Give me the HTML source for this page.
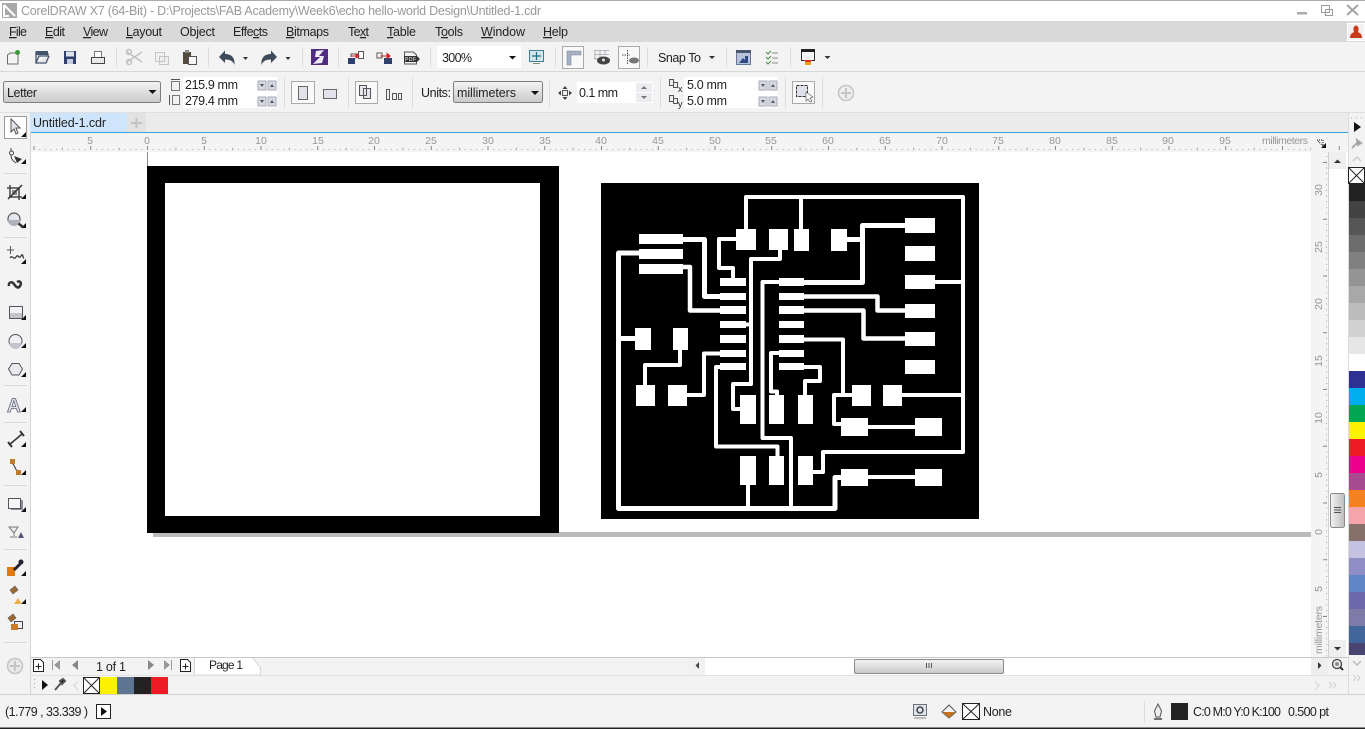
<!DOCTYPE html>
<html><head><meta charset="utf-8"><title>CorelDRAW X7</title>
<style>
html,body{margin:0;padding:0;background:#fff;overflow:hidden}
svg{display:block}
text{font-family:"Liberation Sans",sans-serif;font-size:12.5px;fill:#222}
.r{font-size:10.5px;fill:#969696;text-anchor:middle}
.sep{stroke:#dcdcdc;stroke-width:1}
.t polyline{fill:none;stroke:#fff;stroke-width:4.5;stroke-linejoin:round;stroke-linecap:butt}
</style></head><body>
<svg width="1365" height="729" viewBox="0 0 1365 729">
<defs>
<linearGradient id="g" x1="0" y1="0" x2="0" y2="1"><stop offset="0" stop-color="#f4f4f4"/><stop offset="1" stop-color="#c9c9c9"/></linearGradient>
<linearGradient id="h" x1="0" y1="0" x2="1" y2="0"><stop offset="0" stop-color="#f4f4f4"/><stop offset="1" stop-color="#bdbdbd"/></linearGradient>
</defs>

<!-- backgrounds -->
<rect width="1365" height="729" fill="#f3f3f3"/>
<rect y="0" width="1365" height="21" fill="#fff"/>
<rect y="0" width="1365" height="1" fill="#aaa"/>
<rect y="21" width="1365" height="21" fill="#d9d9d9"/>
<rect y="71" width="1365" height="1" fill="#d8d8d8"/>
<rect y="112" width="1365" height="1" fill="#dedede"/>
<rect x="30" y="113" width="1318" height="19" fill="#ebebeb"/>
<rect x="30" y="132" width="1318" height="1" fill="#38a3dc"/>
<rect x="30" y="133" width="1318" height="19" fill="#f4f4f4"/>
<rect x="31" y="152" width="1280" height="505" fill="#fff"/>
<rect x="30" y="113" width="1" height="581" fill="#d5d5d5"/>
<rect x="1329" y="152" width="19" height="505" fill="#fff"/>
<rect x="1348" y="113" width="1" height="581" fill="#dcdcdc"/>
<rect x="31" y="657" width="1317" height="1" fill="#c8c8c8"/>
<rect x="0" y="694" width="1365" height="1" fill="#cfcfcf"/>
<rect x="0" y="727.500" width="1365" height="1.500" fill="#222"/>

<!-- title -->
<rect x="2" y="3" width="15" height="15" fill="#a8a8a8"/><path d="M4 5 L15 16 M4 5 V16 H9" stroke="#fff" stroke-width="2" fill="none"/>
<text x="21" y="15" textLength="520" style="fill:#989898">CorelDRAW X7 (64-Bit) - D:\Projects\FAB Academy\Week6\echo hello-world Design\Untitled-1.cdr</text>
<rect x="1297" y="12" width="10" height="2.500" fill="#aaa"/>
<path d="M1321.500 5.500h8v7h-8z M1325.500 9.500h7v6h-7z" fill="#fff" stroke="#9a9a9a"/>
<path d="M1347 5 L1358 15 M1358 5 L1347 15" stroke="#a5a5a5" stroke-width="2"/>
<rect x="1347.500" y="23.500" width="17" height="17" fill="#f1f1f1" stroke="#fff"/>
<path d="M1350 38 C1350 33 1353 33 1354 32 C1353 30 1353 26 1356 25.500 C1359 26 1359 30 1358 32 C1359 33 1362 33 1362 38Z" fill="#c8391c"/>

<!-- menu -->
<g>
<text x="9" y="36" textLength="18"><tspan text-decoration="underline">F</tspan>ile</text>
<text x="45" y="36" textLength="20"><tspan text-decoration="underline">E</tspan>dit</text>
<text x="83" y="36" textLength="25"><tspan text-decoration="underline">V</tspan>iew</text>
<text x="126" y="36" textLength="36"><tspan text-decoration="underline">L</tspan>ayout</text>
<text x="180" y="36" textLength="35">Object</text>
<text x="233" y="36" textLength="35">Effe<tspan text-decoration="underline">c</tspan>ts</text>
<text x="286" y="36" textLength="43"><tspan text-decoration="underline">B</tspan>itmaps</text>
<text x="348" y="36" textLength="21">Te<tspan text-decoration="underline">x</tspan>t</text>
<text x="387" y="36" textLength="29"><tspan text-decoration="underline">T</tspan>able</text>
<text x="435" y="36" textLength="28">T<tspan text-decoration="underline">o</tspan>ols</text>
<text x="481" y="36" textLength="44"><tspan text-decoration="underline">W</tspan>indow</text>
<text x="543" y="36" textLength="25"><tspan text-decoration="underline">H</tspan>elp</text>
</g>

<!-- toolbar 1 -->
<path d="M7.500 64V55L10.500 53H18V64Z" fill="#f4f4f4" stroke="#6c6c6c"/><circle cx="17.500" cy="52.500" r="2.500" fill="#3c9a3c"/>
<path d="M36 63V52H41L43 54H48V56H39L36 63H46L49 56V56" fill="#e4e7ec" stroke="#43546e" stroke-width="1.300"/><rect x="36" y="51" width="12" height="4" fill="#43546e"/>
<rect x="64" y="51" width="12" height="13" fill="#2f3f6e"/><rect x="66" y="51.500" width="8" height="5" fill="#dfe3ee"/><rect x="67" y="59" width="6" height="5" fill="#c7cedf"/>
<path d="M94.500 51.500h7v6h-7z" fill="#fff" stroke="#777"/><rect x="91.500" y="57.500" width="13" height="6" fill="#e9e9e9" stroke="#444"/>
<path d="M116.500 47v20 M208.500 47v20 M302.500 47v20 M338.500 47v20 M430.500 47v20 M555.500 47v20 M647.500 47v20 M726.500 47v20 M790.500 47v20" class="sep"/>
<path d="M127 52L142 62M127 62L142 52" stroke="#c2c2c2" stroke-width="1.500"/><circle cx="129" cy="52" r="2.500" fill="none" stroke="#c2c2c2" stroke-width="1.500"/><circle cx="129" cy="62" r="2.500" fill="none" stroke="#c2c2c2" stroke-width="1.500"/>
<path d="M155.500 52.500h9v9h-9z M159.500 56.500h9v8h-9z" fill="#efefef" stroke="#c4c4c4"/>
<rect x="183" y="52" width="8" height="12" fill="#544a3d"/><rect x="185" y="50" width="4" height="3" fill="#888"/><rect x="188.500" y="56.500" width="8" height="8" fill="#f5f5f5" stroke="#555"/>
<path d="M219 57L225 50.500V54C231 54 235 57 234.500 65C233 61 230 59.500 225 59.500V63Z" fill="#3f4a5c"/>
<path d="M243 57h5l-2.500 3z M285.500 57h5l-2.500 3z M824.500 56h6l-3 3z M709 56h6l-3 3z" fill="#333"/>
<path d="M277 57L271 50.500V54C265 54 261 57 261.500 65C263 61 266 59.500 271 59.500V63Z" fill="#3f4a5c"/>
<rect x="311" y="49" width="17" height="16" fill="#4f2c82"/><path d="M324 50L316 51L315 57H320L313 64L322 63L324 56H319Z" fill="#eeeaf5"/>
<rect x="348" y="58" width="7" height="6" fill="#2f3f6e"/><path d="M351 57V54L358 54M358.500 51.500h5v7h-5z" fill="#fff" stroke="#555"/><path d="M351 56h8M359 56l-3-2v4z" stroke="#c22" fill="#c22"/>
<rect x="384" y="58" width="8" height="6" fill="#2f3f6e"/><path d="M377 58v-5h5v5z" fill="#fff" stroke="#555"/><path d="M380 56h8M390 56l-3-2.500v5z" stroke="#c22" fill="#c22"/>
<path d="M404.500 64V52h9l3 3v9z" fill="#f3f3f3" stroke="#555"/><rect x="404" y="56" width="13" height="6" fill="#333"/><text x="405" y="61" style="font-size:5px;fill:#fff" textLength="11">PDF</text><path d="M417 56l3 3-3 3z" fill="#333"/>

<rect x="437" y="46" width="84" height="22" fill="#fff"/>
<text x="442" y="62" textLength="30">300%</text>
<path d="M509 56h7l-3.500 3.500z" fill="#111"/>
<rect x="529.500" y="50.500" width="14" height="11" fill="#d5e3ea" stroke="#3d7f8f"/><path d="M532 56h9M536.500 52v8" stroke="#1b6f85" stroke-width="1.200"/><path d="M533 63.500h7" stroke="#888"/>
<rect x="562.500" y="46.500" width="21" height="22" fill="#f9f9f9" stroke="#aaa"/>
<path d="M567 51h14v4h-10v10h-4z" fill="#a6b1c4" stroke="#7d8899" stroke-width=".6"/>
<path d="M594 50.500h15M594 54.500h15M594 58.500h6M595 50v10M600 50v10M605 50v5" stroke="#a8a8b0" stroke-width=".8"/><ellipse cx="603.500" cy="60.500" rx="6.500" ry="4" fill="#444"/><circle cx="603.500" cy="60" r="1.500" fill="#ddd"/>
<rect x="618.500" y="46.500" width="21" height="22" fill="#f9f9f9" stroke="#aaa"/>
<path d="M622 55h8M627.500 50v15" stroke="#555" stroke-width="1" stroke-dasharray="1.500 1"/><ellipse cx="634" cy="60.500" rx="5" ry="3" fill="#777"/>
<text x="658" y="62" textLength="43">Snap To</text>
<rect x="736.500" y="50.500" width="14" height="14" fill="#b6c3da" stroke="#6b7895"/><rect x="736" y="50" width="15" height="3" fill="#4a5570"/><path d="M739 63l4-5 2 2 0-4 3 0v7z" fill="#2e4a85"/>
<path d="M766 52l2 2 3-3M766 57l2 2 3-3M766 62l2 2 3-3" stroke="#4d8a4d" fill="none"/><path d="M772 53h6M772 58h6M772 63h6" stroke="#888"/>
<rect x="801.500" y="49.500" width="13" height="11" fill="#f5f5f5" stroke="#333"/><rect x="801" y="49" width="14" height="3" fill="#222"/><path d="M804 60h8l-4 5z" fill="#e0301e"/><rect x="805" y="62" width="6" height="3" fill="#f0a010"/>

<!-- toolbar 2 -->
<rect x="3.500" y="81.500" width="157" height="21" rx="2" fill="url(#g)" stroke="#7d7d7d"/>
<text x="7" y="97" textLength="30">Letter</text>
<path d="M148.500 90h8l-4 4z" fill="#111"/>
<rect x="171.500" y="81.500" width="8" height="9" fill="#f2f2f2" stroke="#777"/><path d="M171 79.500h9" stroke="#555"/>
<rect x="172.500" y="95.500" width="7" height="9" fill="#f2f2f2" stroke="#777"/><path d="M169.500 95v10" stroke="#555"/>
<rect x="183" y="77" width="94" height="31" fill="#fff"/>
<text x="185" y="89" textLength="53">215.9 mm</text><text x="185" y="105" textLength="53">279.4 mm</text>
<g fill="#d5d9e2" stroke="#aab"><rect x="258" y="81" width="8" height="9"/><rect x="268" y="81" width="8" height="9"/><rect x="258" y="97" width="8" height="9"/><rect x="268" y="97" width="8" height="9"/></g>
<path d="M260 84h4l-2 3z M270 87h4l-2-3z M260 100h4l-2 3z M270 103h4l-2-3z" fill="#555"/>
<path d="M284.500 77v31M348.500 77v31M412.500 77v31M549.500 81v26M660.500 77v31M785.500 77v31M822.500 77v31" class="sep"/>
<rect x="291.500" y="81.500" width="23" height="22" fill="#f9f9f9" stroke="#aaa"/><rect x="298.500" y="86.500" width="9" height="13" fill="#e2e2ea" stroke="#666"/>
<rect x="323.500" y="89.500" width="13" height="9" fill="#e2e2ea" stroke="#666"/>
<rect x="355.500" y="81.500" width="22" height="22" fill="#f9f9f9" stroke="#aaa"/><path d="M359.500 85.500h7v10h-7z M363.500 88.500h7v10h-7z" fill="#e6e6ee" stroke="#555"/>
<path d="M386.500 89.500h3v10h-3z M392.500 93.500h4v6h-4z M398.500 93.500h3v6h-3z" fill="#eee" stroke="#555"/>
<text x="421" y="97" textLength="30">Units:</text>
<rect x="453.500" y="81.500" width="89" height="21" rx="2" fill="url(#g)" stroke="#7d7d7d"/>
<text x="457" y="97" textLength="59">millimeters</text>
<path d="M531 91h8l-4 4z" fill="#111"/>
<path d="M558 93l3-2.500v5z M572 93l-3-2.500v5z M565 86l-2.500 3h5z M565 100l-2.500-3h5z" fill="#444"/><rect x="562.500" y="90.500" width="5" height="5" fill="#eee" stroke="#555"/>
<rect x="577" y="82" width="76" height="21" fill="#fff"/>
<text x="579" y="97" textLength="39">0.1 mm</text>
<rect x="636" y="83" width="16" height="9" fill="#ececf0"/><rect x="636" y="93" width="16" height="9" fill="#ececf0"/>
<path d="M641 89h6l-3-3z M641 96h6l-3 3z" fill="#777"/>
<path d="M669.500 79.500h4v6h-4z M673.500 82.500h4v5h-4z M669.500 95.500h4v6h-4z M673.500 98.500h4v5h-4z" fill="#eee" stroke="#555"/>
<text x="678" y="92" style="font-size:9px">x</text><text x="678" y="107" style="font-size:9px">y</text>
<rect x="684" y="77" width="94" height="31" fill="#fff"/>
<text x="687" y="89" textLength="40">5.0 mm</text><text x="687" y="105" textLength="40">5.0 mm</text>
<g fill="#d5d9e2" stroke="#aab"><rect x="759" y="81" width="8" height="9"/><rect x="769" y="81" width="8" height="9"/><rect x="759" y="97" width="8" height="9"/><rect x="769" y="97" width="8" height="9"/></g>
<path d="M761 84h4l-2 3z M771 87h4l-2-3z M761 100h4l-2 3z M771 103h4l-2-3z" fill="#555"/>
<rect x="792.500" y="81.500" width="22" height="22" fill="#f9f9f9" stroke="#aaa"/><rect x="796.500" y="85.500" width="11" height="11" fill="#dfe1ea" stroke="#333" stroke-dasharray="3 1"/><path d="M806 92l7 5-3 1 2 3-2 1-2-3-2 2z" fill="#fff" stroke="#666" stroke-width=".7"/>
<circle cx="846" cy="93" r="7.500" fill="#eee" stroke="#c5c5c5" stroke-width="1.500"/><path d="M841 93h10M846 88v10" stroke="#c5c5c5" stroke-width="2"/>

<!-- tab -->
<rect x="30" y="113" width="97" height="19" fill="#cfe5fb"/>
<text x="33" y="127" textLength="73">Untitled-1.cdr</text>
<rect x="127" y="113" width="19" height="19" fill="#e2e2e2"/>
<path d="M131 123h11M136.500 118v10" stroke="#c3c3c3" stroke-width="2"/>

<!-- horizontal ruler -->
<g stroke="#a5a5a5" fill="none">
<path d="M33.500 149.500H1311" stroke-width="1" stroke-dasharray="1 4.675"/>
<path d="M33.500 148H1346" stroke-width="4" stroke-dasharray="1 55.750" stroke="#888"/>
<path d="M61.875 149H1311" stroke-width="2.500" stroke-dasharray="1 55.750"/>
</g>
<g>
<text class="r" x="90" y="144">5</text><text class="r" x="147" y="144">0</text><text class="r" x="204" y="144">5</text><text class="r" x="261" y="144">10</text><text class="r" x="318" y="144">15</text><text class="r" x="374" y="144">20</text><text class="r" x="431" y="144">25</text><text class="r" x="488" y="144">30</text><text class="r" x="545" y="144">35</text><text class="r" x="601" y="144">40</text><text class="r" x="658" y="144">45</text><text class="r" x="715" y="144">50</text><text class="r" x="771" y="144">55</text><text class="r" x="828" y="144">60</text><text class="r" x="885" y="144">65</text><text class="r" x="942" y="144">70</text><text class="r" x="998" y="144">75</text><text class="r" x="1055" y="144">80</text><text class="r" x="1112" y="144">85</text><text class="r" x="1168" y="144">90</text><text class="r" x="1225" y="144">95</text>
</g>
<text x="1262" y="144" textLength="46" style="font-size:10.500px;fill:#969696">millimeters</text>
<path d="M1317 140h6v6M1318 141l7 7" stroke="#111" stroke-dasharray="1 1" fill="none"/><path d="M1321 148h5v-5z" fill="#111"/>

<!-- vertical ruler -->
<rect x="1311" y="152" width="18" height="505" fill="#f4f4f4"/>
<rect x="1328" y="152" width="1" height="505" fill="#d0d0d0"/>
<path d="M1326.500 156V657" stroke="#a5a5a5" stroke-dasharray="1 4.675"/>
<path d="M1325 162V657" stroke="#888" stroke-width="4" stroke-dasharray="1 55.750"/>
<g>
<text class="r" transform="translate(1322 190) rotate(-90)">30</text>
<text class="r" transform="translate(1322 247) rotate(-90)">25</text>
<text class="r" transform="translate(1322 304) rotate(-90)">20</text>
<text class="r" transform="translate(1322 361) rotate(-90)">15</text>
<text class="r" transform="translate(1322 418) rotate(-90)">10</text>
<text class="r" transform="translate(1322 475) rotate(-90)">5</text>
<text class="r" transform="translate(1322 532) rotate(-90)">0</text>
<text class="r" transform="translate(1322 589) rotate(-90)">5</text>
</g>
<text transform="translate(1322 654) rotate(-90)" textLength="48" style="font-size:10.500px;fill:#969696">millimeters</text>

<!-- v scrollbar -->
<rect x="1329" y="152" width="17" height="17" fill="#efefef"/><path d="M1334 163h7l-3.500-3.500z" fill="#333"/>
<rect x="1329" y="640" width="17" height="17" fill="#efefef"/><path d="M1334 647h7l-3.500 3.500z" fill="#333"/>
<rect x="1330.500" y="493.500" width="14" height="34" rx="2" fill="url(#h)" stroke="#8a8a8a"/>
<path d="M1334 507.500h7M1334 510h7M1334 512.500h7" stroke="#555"/>

<!-- palette -->
<g>
<path d="M1351 118h1M1356 118h1M1361 118h1" stroke="#aaa"/>
<path d="M1354 122l7 5-7 5z" fill="#111"/>
<path d="M1352 148l6-6M1357 140l4 3-3 2z" stroke="#aaa" stroke-width="2"/>
<path d="M1353 161l4-4 4 4" stroke="#ccc" fill="none" stroke-width="1.500"/>
<rect x="1348.500" y="167.500" width="16" height="16" fill="#fff" stroke="#222"/><path d="M1349 168l15 15M1364 168l-15 15" stroke="#222"/>
<rect x="1349" y="184" width="16" height="17" fill="#222"/>
<rect x="1349" y="201" width="16" height="17" fill="#434343"/>
<rect x="1349" y="218" width="16" height="17" fill="#565656"/>
<rect x="1349" y="235" width="16" height="17" fill="#6c6c6c"/>
<rect x="1349" y="252" width="16" height="17" fill="#808080"/>
<rect x="1349" y="269" width="16" height="17" fill="#949494"/>
<rect x="1349" y="286" width="16" height="17" fill="#a8a8a8"/>
<rect x="1349" y="303" width="16" height="17" fill="#bcbcbc"/>
<rect x="1349" y="320" width="16" height="17" fill="#d1d1d1"/>
<rect x="1349" y="337" width="16" height="17" fill="#e6e6e6"/>
<rect x="1349" y="354" width="16" height="17" fill="#fff"/>
<rect x="1349" y="371" width="16" height="17" fill="#2e3192"/>
<rect x="1349" y="388" width="16" height="17" fill="#00aeef"/>
<rect x="1349" y="405" width="16" height="17" fill="#00a651"/>
<rect x="1349" y="422" width="16" height="17" fill="#fff200"/>
<rect x="1349" y="439" width="16" height="17" fill="#ed1c24"/>
<rect x="1349" y="456" width="16" height="17" fill="#ec008c"/>
<rect x="1349" y="473" width="16" height="17" fill="#a74a8f"/>
<rect x="1349" y="490" width="16" height="17" fill="#f58220"/>
<rect x="1349" y="507" width="16" height="17" fill="#f5a5a9"/>
<rect x="1349" y="524" width="16" height="17" fill="#85706a"/>
<rect x="1349" y="541" width="16" height="17" fill="#c5c1e0"/>
<rect x="1349" y="558" width="16" height="17" fill="#908ec6"/>
<rect x="1349" y="575" width="16" height="17" fill="#5f86c6"/>
<rect x="1349" y="592" width="16" height="17" fill="#6d69ae"/>
<rect x="1349" y="609" width="16" height="17" fill="#7e7ba8"/>
<rect x="1349" y="626" width="16" height="17" fill="#42669b"/>
<rect x="1349" y="643" width="16" height="12" fill="#4a4470"/>
<path d="M1353 661l4 4 4-4" stroke="#bbb" fill="none" stroke-width="1.500"/>
<path d="M1353 675l3 3-3 3M1357 675l3 3-3 3" stroke="#ccc" fill="none"/>
</g>

<!-- left toolbox -->
<rect x="4.500" y="116.500" width="22" height="22" fill="#fff" stroke="#9a9a9a"/>
<path d="M11 119l0 13 3-3 2 5 2-1-2-5 4 0z" fill="#e3e5ee" stroke="#555"/>
<path d="M21 137h5v-5z M21 164h5v-5z M21 199h5v-5z M21 228h5v-5z M21 264h5v-5z M21 320h5v-5z M21 348h5v-5z M21 377h5v-5z M21 412h5v-5z M21 447h5v-5z M21 475h5v-5z M21 512h5v-5z M21 576h5v-5z M21 604h5v-5z" fill="#111"/>
<path d="M4 173.500h23M4 237.500h23M4 385.500h23M4 422.500h23M4 485.500h23M4 549.500h23M4 642.500h23" stroke="#d8d8d8"/>
<!-- shape -->
<circle cx="11.500" cy="153" r="2" fill="none" stroke="#444"/><path d="M11 148v3M11 155c0 4 2 6 5 8" stroke="#444" fill="none"/><path d="M14 156l8 3-5 4z" fill="#333"/>
<!-- crop -->
<path d="M10 185v12h12M7 188h12v12" stroke="#444" fill="none" stroke-width="1.500"/><path d="M12 190h5v5h-5z" fill="#888"/><path d="M8 199l14-14" stroke="#333" stroke-width="1.500"/>
<!-- zoom -->
<circle cx="14" cy="219" r="6" fill="#e6e6ee" stroke="#555" stroke-width="1.200"/><path d="M8 220h12a6 6 0 0 1-12 0" fill="#b0b0bc"/><path d="M18.500 223.500l5 4" stroke="#333" stroke-width="2.500"/>
<!-- freehand -->
<path d="M7 250h7M10.500 246v8" stroke="#555"/><path d="M10 258c2-4 4 3 6-1s3 3 5-1 2 3 3 2" stroke="#333" fill="none" stroke-width="1.300"/>
<!-- artistic -->
<path d="M9 286c-1-4 3-5 5-2s4 5 6 2 0-6-3-4" stroke="#333" fill="none" stroke-width="2.500"/>
<!-- rect -->
<rect x="9.500" y="306.500" width="13" height="12" fill="#f2f2f6" stroke="#555"/><rect x="10" y="313" width="12" height="5" fill="#c4c4cc"/>
<!-- ellipse -->
<circle cx="15.500" cy="341" r="6.500" fill="#f0f0f4" stroke="#555"/><path d="M9.500 343h12a6 6 0 0 1-12 0" fill="#c4c4cc"/>
<!-- polygon -->
<path d="M12 363.500h7l3.500 5.500-3.500 6h-7l-3.500-6z" fill="#e8e8ee" stroke="#555"/>
<!-- text -->
<text x="7" y="412" style="font-size:19px;font-weight:bold;fill:#dfe1ea;stroke:#667;stroke-width:.8">A</text>
<!-- dimension -->
<path d="M9 445l13-11" stroke="#333" stroke-width="1.500"/><path d="M8 442l4 5M20 431l4 5" stroke="#333" stroke-width="2"/>
<!-- connector -->
<path d="M12 462l6 11" stroke="#333"/><rect x="10" y="459" width="5" height="5" fill="#c07a30"/><rect x="16" y="470" width="5" height="5" fill="#c07a30"/>
<!-- drop shadow -->
<rect x="11" y="500" width="12" height="10" fill="#8a8a9c"/><rect x="8.500" y="498.500" width="12" height="10" fill="#f5f5f8" stroke="#555"/>
<!-- transparency -->
<path d="M9 527h9l-4 6zM14 533v3M10 537h7" stroke="#777" fill="#eee"/><path d="M18 538h6l-3-6z" fill="#557"/>
<!-- eyedropper -->
<rect x="7" y="567" width="8" height="9" fill="#e07a10"/><path d="M14 570l7-7" stroke="#223" stroke-width="3"/><circle cx="21" cy="562" r="2.500" fill="#223"/>
<!-- fill -->
<path d="M10 590l5-4 3 4-5 4z" fill="#a06a35" stroke="#555" stroke-width=".6"/><path d="M14 604l4-6 4 6z" fill="#edb050"/>
<!-- interactive -->
<path d="M8 618l5-4 3 4-5 4z" fill="#a06a35" stroke="#555" stroke-width=".6"/><rect x="14.500" y="621.500" width="8" height="7" fill="#f0f0f0" stroke="#445"/><rect x="11" y="624" width="7" height="6" fill="#c97c2c"/>
<circle cx="15" cy="666" r="7.500" fill="#e9e9e9" stroke="#c5c5c5" stroke-width="1.500"/><path d="M10 666h10M15 661v10" stroke="#c5c5c5" stroke-width="2"/>

<!-- page nav -->
<path d="M33.500 659.500h7l3 3v9h-10z" fill="#fff" stroke="#222"/><path d="M35.500 666.500h6M38.500 663.500v6" stroke="#222"/>
<path d="M52.500 660v10" stroke="#999"/><path d="M60 660l-6 5 6 5z" fill="#999"/>
<path d="M78 660l-6 5 6 5z" fill="#888"/>
<text x="96" y="671" textLength="30">1 of 1</text>
<path d="M148 660l6 5-6 5z" fill="#888"/>
<path d="M164 660l6 5-6 5z" fill="#999"/><path d="M171.500 660v10" stroke="#999"/>
<path d="M180.500 659.500h7l3 3v9h-10z" fill="#fff" stroke="#222"/><path d="M182.500 666.500h6M185.500 663.500v6" stroke="#222"/>
<path d="M194.500 658V675H260.500V668L253 658" fill="#fff" stroke="#d5d5d5"/>
<text x="209" y="669" textLength="34" style="font-size:12px">Page 1</text>
<rect x="688" y="658" width="17" height="17" fill="#f1f1f1"/><path d="M699 662v7l-3.500-3.500z" fill="#444"/>
<rect x="705" y="658" width="606" height="17" fill="#fff"/>
<rect x="854.500" y="659.500" width="149" height="14" rx="1.500" fill="url(#g)" stroke="#8a8a8a"/>
<path d="M926.500 663v5M929 663v5M931.500 663v5" stroke="#555"/>
<rect x="1311" y="658" width="17" height="17" fill="#eee"/><path d="M1318 662l3.500 3.500-3.500 3.500z" fill="#333"/>
<circle cx="1337" cy="664" r="4.500" fill="#eee" stroke="#444" stroke-width="1.300"/><circle cx="1337" cy="664" r="2" fill="#889"/><path d="M1340 667l3 3" stroke="#333" stroke-width="2"/>
<rect x="31" y="675" width="1317" height="1" fill="#e2e2e2"/>

<!-- doc palette -->
<path d="M34.500 679v1M34.500 683v1M34.500 687v1" stroke="#aaa"/>
<path d="M42 680l6 5-6 5z" fill="#111"/>
<path d="M55 690l6-7M60 681l3-2 2 2-3 3z" stroke="#555" stroke-width="2"/>
<path d="M78 681l-4 4.500 4 4.500" stroke="#ddd" fill="none" stroke-width="1.500"/>
<rect x="83.500" y="677.500" width="16" height="16" fill="#fff" stroke="#222"/><path d="M84 678l15 15M99 678l-15 15" stroke="#222"/>
<rect x="100" y="677" width="17" height="17" fill="#fff200"/><rect x="117" y="677" width="17" height="17" fill="#5d7593"/><rect x="134" y="677" width="17" height="17" fill="#222"/><rect x="151" y="677" width="17" height="17" fill="#ed1c24"/>
<path d="M1315 681l4 4.500-4 4.500" stroke="#ddd" fill="none" stroke-width="1.500"/>
<path d="M1329 682l3 3-3 3M1333 682l3 3-3 3" stroke="#ccc" fill="none"/>

<!-- status -->
<text x="5" y="716" textLength="83">(1.779 , 33.339 )</text>
<rect x="96.500" y="704.500" width="14" height="14" fill="#fff" stroke="#222"/><path d="M101 707l6 4.500-6 4.500z" fill="#111"/>
<rect x="913.500" y="704.500" width="13" height="11" fill="#dfe3ea" stroke="#6b7080"/><circle cx="920" cy="710" r="3" fill="none" stroke="#444" stroke-width="1.500"/><path d="M914 718h12" stroke="#888"/>
<path d="M942 712l7-7 7 7-7 6z" fill="#f3f3f3" stroke="#555"/><path d="M943 712h12l-6 6z" fill="#c9701e"/>
<rect x="962.500" y="703.500" width="17" height="16" fill="#fff" stroke="#222"/><path d="M963 704l16 15M979 704l-16 15" stroke="#222"/>
<text x="983" y="716" textLength="29">None</text>
<path d="M1144.500 701v22" class="sep"/>
<path d="M1158 704l3.500 7-1.500 6h-4l-1.500-6z" fill="#eee" stroke="#555"/><path d="M1154 719h8" stroke="#444" stroke-width="1.500"/>
<rect x="1171" y="703" width="17" height="17" fill="#222"/>
<text x="1193" y="716" textLength="88">C:0 M:0 Y:0 K:100</text>
<text x="1288" y="716" textLength="41">0.500 pt</text>

<!-- page -->
<rect x="147" y="152" width="1" height="14" fill="#888"/>
<rect x="153" y="532" width="1158" height="5" fill="#bbb"/>
<rect x="147" y="166" width="412" height="367" fill="#000"/>
<rect x="165" y="183" width="375" height="333" fill="#fff"/>

<!-- PCB -->
<rect x="601" y="183" width="378" height="336" fill="#000"/>
<g class="t">
<polyline points="639,253 618.500,253 618.500,508.500 835,508.500 835,477.500 841,477.500" style="stroke-width:5"/>
<polyline points="618,338.500 635,338.500" style="stroke-width:5"/>
<polyline points="683,239.500 704.500,239.500 704.500,296.500 720,296.500" style="stroke-width:5"/>
<polyline points="683,267 690,267 690,310.500 720,310.500"/>
<polyline points="736,239 719,239 719,268 733,268 733,278" style="stroke-width:4"/>
<polyline points="746,229 746,197 963,197 963,452 823,452 823,472 813,472" style="stroke-width:4"/>
<polyline points="801,197 801,229" style="stroke-width:4"/>
<polyline points="780,250 780,259 751,259 751,384 733,384 733,409 740,409" style="stroke-width:4"/>
<polyline points="746,324.500 751,324.500" style="stroke-width:4"/>
<polyline points="779,282 762.500,282 762.500,438 791,438 791,508" style="stroke-width:4"/>
<polyline points="804,282.500 862.500,282.500 862.500,225.500 905,225.500" style="stroke-width:5"/>
<polyline points="847,239.500 862,239.500" style="stroke-width:5"/>
<polyline points="804,296.500 877.500,296.500 877.500,310.500 905,310.500"/>
<polyline points="804,310.500 863.500,310.500 863.500,338.500 905,338.500"/>
<polyline points="804,339.500 843,339.500 843,395" style="stroke-width:4"/>
<polyline points="852,395 834,395 834,424 841,424" style="stroke-width:4"/>
<polyline points="902,395 963,395" style="stroke-width:4"/>
<polyline points="868,427 915,427" style="stroke-width:4"/>
<polyline points="868,477 915,477" style="stroke-width:4"/>
<polyline points="935,282 963,282" style="stroke-width:4"/>
<polyline points="645,385 645,365 680,365 680,350" style="stroke-width:4"/>
<polyline points="687,395 704,395 704,353.500 720,353.500" style="stroke-width:4"/>
<polyline points="720,367 716,367 716,446.500 777.500,446.500 777.500,456" style="stroke-width:4"/>
<polyline points="779,353 771,353 771,391.500 777,391.500 777,395" style="stroke-width:4"/>
<polyline points="804,367 820,367 820,381 805,381 805,395" style="stroke-width:4"/>
<polyline points="748,485 748,508" style="stroke-width:4"/>
</g>
<g fill="#fff">
<rect x="639" y="234" width="44" height="10"/><rect x="639" y="249" width="44" height="10"/><rect x="639" y="264" width="44" height="10"/>
<rect x="736" y="229" width="20" height="21"/><rect x="769" y="229" width="19" height="21"/><rect x="794" y="229" width="15" height="22"/><rect x="831" y="229" width="16" height="22"/>
<rect x="905" y="218" width="30" height="15"/><rect x="905" y="246" width="30" height="15"/><rect x="905" y="275" width="30" height="14"/><rect x="905" y="304" width="30" height="14"/><rect x="905" y="332" width="30" height="14"/><rect x="905" y="360" width="30" height="14"/>
<rect x="720" y="278" width="26" height="8"/><rect x="720" y="293" width="26" height="7"/><rect x="720" y="306" width="26" height="8"/><rect x="720" y="321" width="26" height="7"/><rect x="720" y="335" width="26" height="8"/><rect x="720" y="350" width="26" height="7"/><rect x="720" y="363" width="26" height="7"/>
<rect x="779" y="278" width="25" height="8"/><rect x="779" y="293" width="25" height="7"/><rect x="779" y="306" width="25" height="8"/><rect x="779" y="321" width="25" height="7"/><rect x="779" y="335" width="25" height="8"/><rect x="779" y="350" width="25" height="7"/><rect x="779" y="363" width="25" height="7"/>
<rect x="635" y="328" width="16" height="22"/><rect x="673" y="328" width="15" height="22"/>
<rect x="636" y="385" width="19" height="21"/><rect x="668" y="385" width="19" height="21"/>
<rect x="740" y="395" width="16" height="29"/><rect x="769" y="395" width="15" height="29"/><rect x="798" y="395" width="15" height="29"/>
<rect x="740" y="456" width="16" height="29"/><rect x="769" y="456" width="15" height="29"/><rect x="798" y="456" width="15" height="29"/>
<rect x="852" y="385" width="19" height="21"/><rect x="883" y="385" width="19" height="21"/>
<rect x="841" y="418" width="27" height="18"/><rect x="915" y="418" width="27" height="18"/>
<rect x="841" y="469" width="27" height="17"/><rect x="915" y="469" width="27" height="17"/>
</g>
</svg>
</body></html>
